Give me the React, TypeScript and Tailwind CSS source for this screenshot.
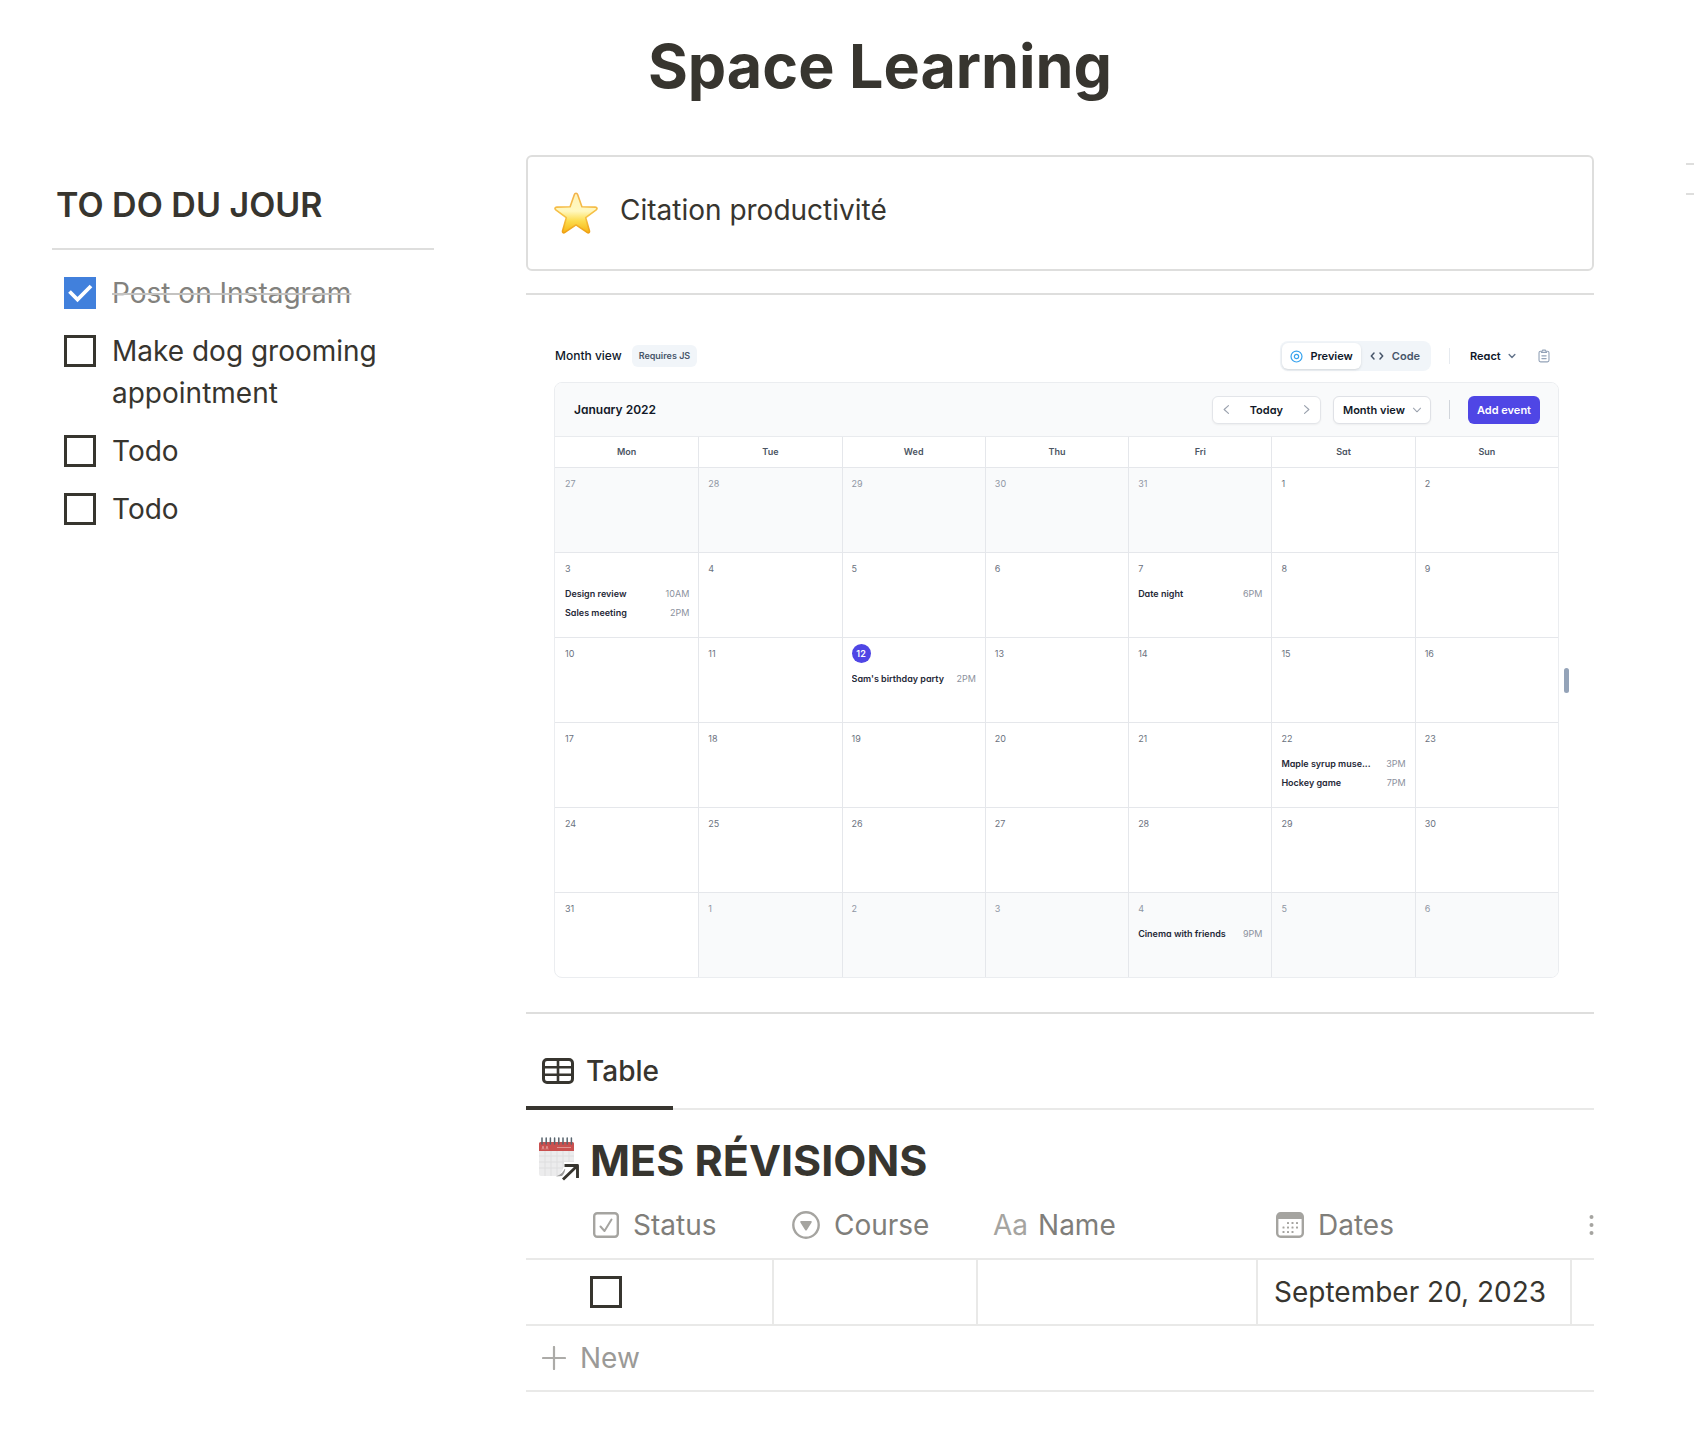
import { useState, type ReactNode } from "react";

type CalEvent = { name: string; time: string };
type Day = { n: number; out?: boolean; today?: boolean; events?: CalEvent[] };

const WEEKDAYS = ["Mon", "Tue", "Wed", "Thu", "Fri", "Sat", "Sun"];

const EVENTS: Record<number, CalEvent[]> = {
  3: [
    { name: "Design review", time: "10AM" },
    { name: "Sales meeting", time: "2PM" },
  ],
  7: [{ name: "Date night", time: "6PM" }],
  12: [{ name: "Sam's birthday party", time: "2PM" }],
  22: [
    { name: "Maple syrup muse...", time: "3PM" },
    { name: "Hockey game", time: "7PM" },
  ],
};

const DAYS: Day[] = [
  ...[27, 28, 29, 30, 31].map((n) => ({ n, out: true })),
  ...Array.from({ length: 31 }, (_, i) => ({ n: i + 1, today: i + 1 === 12, events: EVENTS[i + 1] })),
  ...[1, 2, 3, 4, 5, 6].map((n) => ({
    n,
    out: true,
    events: n === 4 ? [{ name: "Cinema with friends", time: "9PM" }] : undefined,
  })),
];

const WEEKS = Array.from({ length: 6 }, (_, i) => DAYS.slice(i * 7, i * 7 + 7));

function StarIcon() {
  return (
    <svg viewBox="0 0 44 42" className="h-[42px] w-11 shrink-0" aria-hidden="true">
      <defs>
        <linearGradient id="starFill" x1="0" y1="0" x2="0" y2="1">
          <stop offset="0" stopColor="#fff3b8" />
          <stop offset="0.45" stopColor="#fff8c0" />
          <stop offset="0.7" stopColor="#fcdc4e" />
          <stop offset="1" stopColor="#f7b411" />
        </linearGradient>
        <linearGradient id="starEdge" x1="0" y1="0" x2="0" y2="1">
          <stop offset="0" stopColor="#f3b24a" />
          <stop offset="0.6" stopColor="#f6c345" />
          <stop offset="1" stopColor="#ee9f14" />
        </linearGradient>
      </defs>
      <path
        d="M22 1.2c.8 0 1.4.6 1.7 1.5l4.2 12.1 13.3.3c1.9.1 2.4 1.7 1 2.8L31.7 25.700l3.700 13.100c.4 1.700-.8 2.600-2.300 1.600L22 32.900l-11.100 7.500c-1.500 1-2.700.1-2.300-1.600l3.700-13.100L1.800 17.900c-1.400-1.100-.9-2.700 1-2.800l13.300-.3 4.200-12.100c.3-.9.9-1.500 1.700-1.500z"
        fill="url(#starFill)"
        stroke="url(#starEdge)"
        strokeWidth="1.6"
        strokeLinejoin="round"
      />
    </svg>
  );
}

function LinkedCalendarIcon() {
  return (
    <svg viewBox="0 0 44 46" className="h-[46px] w-11 shrink-0" aria-hidden="true">
      <path d="M1 6h35v31a2 2 0 0 1-2 2H3a2 2 0 0 1-2-2z" fill="#ececed" />
      <path d="M1 6.500a1.500 1.500 0 0 1 1.500-1.500h32a1.500 1.500 0 0 1 1.500 1.500V14H1z" fill="#c9504f" />
      <path d="M4 12.500l1-3.500 1 3.500M8 12.500l1-3.500 1 3.500M19 10.500h14" stroke="#df9492" strokeWidth="1" fill="none" />
      <path d="M7 14v25M13 14v25M19 14v25M25 14v25M31 14v25M1 19h35M1 25h35M1 31h35" stroke="#dededf" strokeWidth="1" />
      <path
        d="M4 1v6M8.200 1v6M12.400 1v6M16.600 1v6M20.800 1v6M25 1v6M29.200 1v6M33.400 1v6"
        stroke="#58646e"
        strokeWidth="1.500"
        strokeLinecap="round"
      />
      <path d="M18 40c5-3 6-6 9-13h13v15H18z" fill="#fff" />
      <path d="M18 39.500c5-2 8-5 9.500-9.500-.5 5-1.500 7-3.500 9z" fill="#9b9b9b" />
      <path d="M26 28.500h14.500V41M39 30 26 42.500" stroke="#fff" strokeWidth="7" fill="none" />
      <path d="M26.500 28.500h13v12.500M39 29 25 42.500" stroke="#37352f" strokeWidth="2.900" fill="none" strokeLinejoin="round" />
    </svg>
  );
}

function TableIcon() {
  return (
    <svg viewBox="0 0 32 26" className="h-[26px] w-8" fill="none" stroke="#37352f" aria-hidden="true">
      <rect x="1.500" y="1.500" width="29" height="23" rx="3.500" strokeWidth="3" />
      <path d="M2 9.300h28M2 16.700h28M16 2v22" strokeWidth="2.600" />
    </svg>
  );
}

function CheckPropIcon() {
  return (
    <svg viewBox="0 0 26 26" className="size-[26px]" fill="none" stroke="#a5a4a0" aria-hidden="true">
      <rect x="1.200" y="1.200" width="23.600" height="23.600" rx="3" strokeWidth="2.400" />
      <path d="M7.500 14.500l4 4.500L18.500 7.500" strokeWidth="2" strokeLinecap="round" strokeLinejoin="round" />
    </svg>
  );
}

function SelectPropIcon() {
  return (
    <svg viewBox="0 0 28 28" className="size-7" aria-hidden="true">
      <circle cx="14" cy="14" r="12.700" fill="none" stroke="#a5a4a0" strokeWidth="2.400" />
      <path d="M9.200 10h9.600c.8 0 1.200.7.8 1.400l-4.700 7.500c-.4.700-1.400.7-1.800 0l-4.700-7.500c-.4-.7 0-1.400.8-1.400z" fill="#a5a4a0" />
    </svg>
  );
}

function DatePropIcon() {
  const dots = [
    [12, 11], [16.500, 11], [21, 11],
    [7.500, 15.500], [12, 15.500], [16.500, 15.500], [21, 15.500],
    [7.500, 20], [12, 20], [16.500, 20],
  ];
  return (
    <svg viewBox="0 0 28 26" className="h-[26px] w-7" aria-hidden="true">
      <rect x="1.200" y="1.200" width="25.600" height="23.600" rx="3.500" fill="none" stroke="#a5a4a0" strokeWidth="2.400" />
      <path d="M1 7V4a3 3 0 0 1 3-3h20a3 3 0 0 1 3 3v3z" fill="#a5a4a0" />
      {dots.map(([x, y]) => (
        <rect key={`${x}-${y}`} x={x - 1} y={y - 1} width="2" height="2" rx="0.500" fill="#a5a4a0" />
      ))}
    </svg>
  );
}

function Chevron({ dir, className }: { dir: "left" | "right" | "down"; className: string }) {
  const d = { left: "M9.500 2 4 7l5.500 5", right: "M4.500 2 10 7l-5.500 5", down: "M2 4.500 7 9.500l5-5" }[dir];
  return (
    <svg viewBox="0 0 14 14" className={className} fill="none" stroke="currentColor" strokeLinecap="round" strokeLinejoin="round" aria-hidden="true">
      <path d={d} />
    </svg>
  );
}

function Box({ id, label, defaultChecked = false }: { id: string; label?: string; defaultChecked?: boolean }) {
  return (
    <span className="relative block size-8 shrink-0">
      <input
        id={id}
        type="checkbox"
        aria-label={label}
        defaultChecked={defaultChecked}
        className="peer block size-8 appearance-none border-3 border-[#37352f] checked:border-0 checked:bg-[#4180dc]"
      />
      <svg viewBox="0 0 32 32" className="pointer-events-none absolute inset-0 hidden size-8 peer-checked:block" aria-hidden="true">
        <path d="M5.500 14.500 13.500 22.500 27 9" fill="none" stroke="#fff" strokeWidth="3.800" />
      </svg>
    </span>
  );
}

function Todo({ id, text, done }: { id: string; text: string; done?: boolean }) {
  return (
    <li className="flex items-start gap-4">
      <span className="pt-[5px]">
        <Box id={id} defaultChecked={done} />
      </span>
      <label htmlFor={id} className={done ? "text-[#82817d] line-through decoration-[#c4c3c1] decoration-2" : ""}>
        {text}
      </label>
    </li>
  );
}

function Rule() {
  return <hr className="h-0.5 border-0 bg-[#dededd]" />;
}

function DayCell({ day }: { day: Day }) {
  return (
    <td className={`h-[85px] border-t border-l border-[#e5e7eb] px-[9px] pt-[6px] align-top first:border-l-0 first:pl-[10px] ${day.out ? "bg-[#f9fafb] text-[#8f96a3]" : "text-[#6b7280]"}`}>
      <time className={`flex h-[19px] items-center ${day.today ? "w-[19px] justify-center rounded-full bg-[#4f46e5] font-semibold text-white" : ""}`}>
        {day.n}
      </time>
      {day.events && (
        <ol className="mt-[6px]">
          {day.events.map((e) => (
            <li key={e.name} className="flex h-[19px] items-center leading-[19px]">
              <a href="#event" className="min-w-0 flex-auto truncate font-semibold text-[#1f2937]">{e.name}</a>
              <time className="ml-2 shrink-0 text-[#8b919d]">{e.time}</time>
            </li>
          ))}
        </ol>
      )}
    </td>
  );
}

function CalendarPreview() {
  return (
    <section className="relative pt-[46px] pr-[35px] pb-[34px] pl-7 text-[11px] leading-4 text-[#0f172a] [font-feature-settings:'cv11']">
      <div className="flex items-center justify-between">
        <div className="flex items-center gap-[10px] pl-px">
          <h2 className="text-xs font-medium">Month view</h2>
          <span className="rounded-md bg-[#f1f5f9] px-[7px] py-[3px] text-[9px] font-semibold text-[#475569]">Requires JS</span>
        </div>
        <div className="flex items-center">
          <div className="flex h-[30px] items-center rounded-lg bg-[#f1f5f9] p-0.5 font-semibold">
            <button className="flex h-[26px] items-center gap-[7px] rounded-md bg-white px-2 shadow-sm">
              <svg viewBox="0 0 14 14" className="size-[13px]" fill="none" stroke="#38a3ee" strokeWidth="1.300" aria-hidden="true">
                <circle cx="7" cy="7" r="5.900" />
                <circle cx="7" cy="7" r="2.300" />
              </svg>
              Preview
            </button>
            <button className="flex h-[26px] items-center gap-2 px-[9px] text-[#475569]">
              <svg viewBox="0 0 14 14" className="size-[14px]" fill="none" stroke="#475569" strokeWidth="1.500" strokeLinecap="round" strokeLinejoin="round" aria-hidden="true">
                <path d="M4 4 1.300 7 4 10M10 4l2.700 3L10 10" />
              </svg>
              Code
            </button>
          </div>
          <span className="ml-[18px] h-4 w-px bg-[#e6eaef]" />
          <span className="relative ml-5 flex items-center">
            <select aria-label="Framework" className="w-[46px] appearance-none bg-transparent font-semibold">
              <option>React</option>
              <option>Vue</option>
            </select>
            <Chevron dir="down" className="pointer-events-none absolute right-0 size-2 stroke-[2.500] text-[#64748b]" />
          </span>
          <button aria-label="Copy code" className="mr-[9px] ml-[22px]">
            <svg viewBox="0 0 14 16" className="h-[14px] w-3" fill="none" stroke="#94a3b8" strokeWidth="1.300" strokeLinecap="round" strokeLinejoin="round" aria-hidden="true">
              <path d="M4 2.500H3A1.800 1.800 0 0 0 1.200 4.300V13A1.800 1.800 0 0 0 3 14.800h8A1.800 1.800 0 0 0 12.800 13V4.300A1.800 1.800 0 0 0 11 2.500h-1" />
              <path d="M5.300 1.200h3.400l1.300 2.600H4zM4.500 7.800h5M4.500 11h5" />
            </svg>
          </button>
        </div>
      </div>

      <div className="mt-[11px] overflow-hidden rounded-lg border border-[#ebedf0]">
        <header className="flex h-[54px] items-center justify-between border-b border-[#e9ebee] bg-[#f9fafb] pr-[18px] pl-[19px]">
          <h3 className="text-xs font-semibold text-[#111827]">January 2022</h3>
          <div className="flex items-center font-semibold text-[#111827]">
            <div className="flex h-7 items-center rounded-md border border-[#e3e5e9] bg-white shadow-xs">
              <button aria-label="Previous month" className="px-2 text-[#9ca3af]">
                <Chevron dir="left" className="size-[11px] stroke-[1.500]" />
              </button>
              <button className="px-[10px]">Today</button>
              <button aria-label="Next month" className="px-2 text-[#9ca3af]">
                <Chevron dir="right" className="size-[11px] stroke-[1.500]" />
              </button>
            </div>
            <span className="relative ml-3 flex items-center">
              <select aria-label="Calendar view" className="h-7 w-[98px] appearance-none rounded-md border border-[#dfe1e6] bg-white pl-[9px] shadow-xs">
                <option>Month view</option>
                <option>Week view</option>
              </select>
              <Chevron dir="down" className="pointer-events-none absolute right-[9px] size-[10px] stroke-[1.500] text-[#9ca3af]" />
            </span>
            <span className="ml-[18px] h-[19px] w-px bg-[#d1d5db]" />
            <button className="ml-[18px] h-7 rounded-md bg-[#4f46e5] px-[9px] text-white">Add event</button>
          </div>
        </header>
        <table className="w-full table-fixed border-separate border-spacing-0 text-[9px]">
          <thead>
            <tr>
              {WEEKDAYS.map((d) => (
                <th key={d} className="h-[30px] border-l border-[#e5e7eb] font-semibold text-[#4b5563] first:border-l-0">{d}</th>
              ))}
            </tr>
          </thead>
          <tbody>
            {WEEKS.map((week, i) => (
              <tr key={i}>
                {week.map((day, j) => (
                  <DayCell key={j} day={day} />
                ))}
              </tr>
            ))}
          </tbody>
        </table>
      </div>
      <span className="absolute top-[373px] right-[25px] h-[25px] w-[5px] rounded-full bg-[#94a3b8]" />
    </section>
  );
}

function ColumnHead({ icon, label, className }: { icon: ReactNode; label: string; className: string }) {
  return (
    <th className={`h-[66px] font-normal ${className}`}>
      <span className="flex items-center gap-[14px]">
        {icon}
        {label}
      </span>
    </th>
  );
}

function Revisions() {
  const [rows, setRows] = useState(["September 20, 2023"]);
  return (
    <section>
      <div role="tablist" className="mt-[38px] flex border-b-2 border-[#e9e9e8]">
        <button role="tab" aria-selected="true" className="-mb-0.5 flex h-[58px] items-start border-b-4 border-[#37352f] pr-[14px] pl-4 font-medium">
          <span className="flex h-[38px] items-center gap-3">
            <TableIcon />
            Table
          </span>
        </button>
      </div>
      <h2 className="flex h-[82px] items-center gap-2 pt-[18px] pl-3 text-[43px] leading-none font-bold">
        <LinkedCalendarIcon />
        MES RÉVISIONS
      </h2>
      <div className="overflow-hidden">
        <table className="w-full table-fixed border-separate border-spacing-0 text-left">
          <colgroup>
            <col className="w-[248px]" />
            <col className="w-[204px]" />
            <col />
            <col className="w-[314px]" />
            <col className="w-[22px]" />
          </colgroup>
          <thead className="text-[#7f7e7a]">
            <tr>
              <ColumnHead icon={<CheckPropIcon />} label="Status" className="pl-[67px]" />
              <ColumnHead icon={<SelectPropIcon />} label="Course" className="pl-[18px]" />
              <th className="h-[66px] pl-[15px] font-normal">
                <span className="mr-[10px] text-[#a5a4a0]" aria-hidden="true">Aa</span>
                Name
              </th>
              <ColumnHead icon={<DatePropIcon />} label="Dates" className="pl-[18px]" />
              <th aria-label="More properties" className="h-[66px] pl-[17px]">
                <svg viewBox="0 0 5 24" className="h-6 w-[5px]" fill="#a5a4a0" aria-hidden="true">
                  <circle cx="2.500" cy="4" r="2" />
                  <circle cx="2.500" cy="12" r="2" />
                  <circle cx="2.500" cy="20" r="2" />
                </svg>
              </th>
            </tr>
          </thead>
          <tbody>
            {rows.map((date, i) => (
              <tr key={i} className="[&>td]:h-[68px] [&>td]:border-y-2 [&>td]:border-r-2 [&>td]:border-[#e9e9e8] [&>td:last-child]:border-r-0">
                <td className="pl-16"><Box id={`revision-${i}`} label="Status" /></td>
                <td />
                <td />
                <td className="pl-4 whitespace-nowrap">{date}</td>
                <td />
              </tr>
            ))}
          </tbody>
        </table>
        <button
          onClick={() => setRows([...rows, ""])}
          className="flex h-[66px] w-full items-center gap-[14px] border-b-2 border-[#e9e9e8] pl-4 text-[#9b9a97]"
        >
          <svg viewBox="0 0 24 24" className="size-6" stroke="#acaba8" strokeWidth="2.200" strokeLinecap="round" aria-hidden="true">
            <path d="M12 1v22M1 12h22" />
          </svg>
          New
        </button>
      </div>
    </section>
  );
}

export default function App() {
  return (
    <div className="overflow-hidden bg-white font-['Inter',sans-serif] text-[28px] leading-[42px] text-[#37352f]">
      <h1 className="pt-[30px] pl-[66px] text-center text-[61px] leading-[72px] font-bold">Space Learning</h1>
      <div className="mt-[53px] flex gap-[92px] pl-[52px]">
        <aside className="w-[382px] shrink-0">
          <h2 className="pt-[26px] pb-[19px] pl-1 text-[34px] leading-[48px] font-semibold">TO DO DU JOUR</h2>
          <Rule />
          <ul className="mt-[22px] space-y-4 pl-3">
            <Todo id="todo-1" text="Post on Instagram" done />
            <Todo id="todo-2" text="Make dog grooming appointment" />
            <Todo id="todo-3" text="Todo" />
            <Todo id="todo-4" text="Todo" />
          </ul>
        </aside>
        <main className="min-w-0 flex-1">
          <div className="mb-[22px] flex h-[116px] items-center gap-[22px] rounded-md border-2 border-[#dededd] pl-[26px]">
            <StarIcon />
            <p className="pb-[6px]">Citation productivité</p>
          </div>
          <Rule />
          <CalendarPreview />
          <Rule />
          <Revisions />
        </main>
        <div className="mt-2 h-8 w-2 shrink-0 border-y-2 border-[#dededd]" />
      </div>
    </div>
  );
}
